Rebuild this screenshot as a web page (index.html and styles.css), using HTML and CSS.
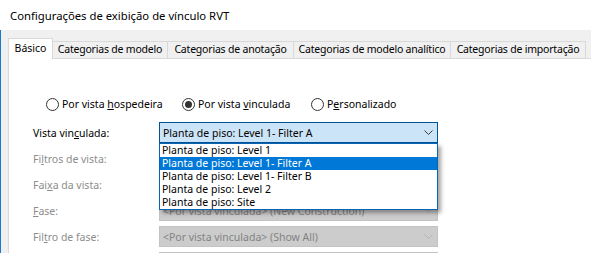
FILE: index.html
```html
<!DOCTYPE html>
<html lang="pt">
<head>
<meta charset="utf-8">
<title>Configurações de exibição de vínculo RVT</title>
<link rel="stylesheet" href="styles.css">
</head>
<body>
<div class="titlebar">Configurações de exibição de vínculo RVT</div>
<div class="dialog">
  <div class="tabs">
    <div class="tab active t1">Básico</div>
    <div class="tab t2">Categorias de modelo</div>
    <div class="tab t3">Categorias de anotação</div>
    <div class="tab t4">Categorias de modelo analítico</div>
    <div class="tab t5">Categorias de importação</div>
  </div>
  <div class="panel">
    <div class="radios">
      <div class="radio r1"><span class="circle"></span><span>Por vista <u>h</u>ospedeira</span></div>
      <div class="radio r2"><span class="circle checked"></span><span>Por vista <u>v</u>inculada</span></div>
      <div class="radio r3"><span class="circle"></span><span>P<u>e</u>rsonalizado</span></div>
    </div>
    <div class="form">
      <div class="label">Vista vin<u>c</u>ulada:</div>
      <div class="combo-wrap">
        <div class="combo active">
          <span class="value">Planta de piso: Level 1- Filter A</span>
          <svg class="chev" width="9" height="5" viewBox="0 0 9 5"><polyline points="0.5,0.5 4.5,4.5 8.5,0.5" fill="none" stroke="#3c3c3c" stroke-width="1"/></svg>
        </div>
        <ul class="dropdown">
          <li>Planta de piso: Level 1</li>
          <li class="sel">Planta de piso: Level 1- Filter A</li>
          <li>Planta de piso: Level 1- Filter B</li>
          <li>Planta de piso: Level 2</li>
          <li>Planta de piso: Site</li>
        </ul>
      </div>

      <div class="label disabled">Fi<u>l</u>tros de vista:</div>
      <div class="combo disabled">
        <span class="value"></span>
        <svg class="chev" width="9" height="5" viewBox="0 0 9 5"><polyline points="0.5,0.5 4.5,4.5 8.5,0.5" fill="none" stroke="#b4b4b4" stroke-width="1"/></svg>
      </div>

      <div class="label disabled">Fai<u>x</u>a da vista:</div>
      <div class="combo disabled">
        <span class="value"></span>
        <svg class="chev" width="9" height="5" viewBox="0 0 9 5"><polyline points="0.5,0.5 4.5,4.5 8.5,0.5" fill="none" stroke="#b4b4b4" stroke-width="1"/></svg>
      </div>

      <div class="label disabled"><u>F</u>ase:</div>
      <div class="combo disabled">
        <span class="value">&lt;Por vista vinculada&gt; (New Construction)</span>
        <svg class="chev" width="9" height="5" viewBox="0 0 9 5"><polyline points="0.5,0.5 4.5,4.5 8.5,0.5" fill="none" stroke="#b4b4b4" stroke-width="1"/></svg>
      </div>

      <div class="label disabled">Fil<u>t</u>ro de fase:</div>
      <div class="combo disabled">
        <span class="value">&lt;Por vista vinculada&gt; (Show All)</span>
        <svg class="chev" width="9" height="5" viewBox="0 0 9 5"><polyline points="0.5,0.5 4.5,4.5 8.5,0.5" fill="none" stroke="#b4b4b4" stroke-width="1"/></svg>
      </div>

      <div class="label disabled"></div>
      <div class="combo disabled">
        <span class="value"></span>
      </div>
    </div>
  </div>
</div>
</body>
</html>
```

FILE: styles.css
```css
* { box-sizing: border-box; }

body {
  margin: 0;
  width: 591px;
  height: 253px;
  overflow: hidden;
  background: #f0f0f0;
  font-family: "Noto Sans", "DejaVu Sans", sans-serif;
  font-size: 10.5px;
  color: #000;
}

u { text-decoration: underline; text-underline-offset: 1px; }

.titlebar {
  height: 30px;
  background: #fff;
  padding-left: 10px;
  display: flex;
  align-items: center;
  font-size: 11.3px;
}

.dialog {
  border-left: 1px solid #1a79cc;
  padding: 8px 0 0 7px;
  height: 223px;
}

.tabs {
  display: flex;
  align-items: flex-end;
  height: 21px;
  position: relative;
  z-index: 1;
  margin-bottom: -1px;
}

.tab {
  height: 18px;
  border: 1px solid #d9d9d9;
  line-height: 15px;
  margin-left: -1px;
  background: #f0f0f0;
  white-space: nowrap;
  text-align: center;
  letter-spacing: -0.2px;
  flex: none;
}
.tab.t1 { width: 45px; }
.tab.t2 { width: 116px; }
.tab.t3 { width: 127px; }
.tab.t4 { width: 158px; }
.tab.t5 { width: 136px; }

.tab.active {
  height: 21px;
  margin-left: 0;
  border-bottom: none;
  background: #fff;
  line-height: 18px;
  letter-spacing: 0;
  z-index: 2;
}

.panel {
  background: #fff;
  border: 1px solid #d9d9d9;
  border-right: none;
  height: 200px;
}

.radios {
  display: flex;
  height: 14px;
  margin-top: 38px;
  padding-left: 37px;
  align-items: center;
}

.radio {
  display: flex;
  align-items: center;
  gap: 3px;
  white-space: nowrap;
}
.radio.r1 { width: 136px; }
.radio.r2 { width: 129px; }

.circle {
  width: 13px;
  height: 13px;
  border: 1px solid #333;
  border-radius: 50%;
  background: #fff;
  display: flex;
  align-items: center;
  justify-content: center;
  flex: none;
}
.circle.checked::after {
  content: "";
  width: 7px;
  height: 7px;
  border-radius: 50%;
  background: #333;
}

.form {
  display: grid;
  grid-template-columns: 126px 279px;
  grid-auto-rows: 21px;
  row-gap: 5px;
  margin-top: 11px;
  padding-left: 24px;
  align-items: center;
}

.label { white-space: nowrap; }
.label.disabled { color: #8d8d8d; }

.combo-wrap { position: relative; height: 21px; }

.combo {
  height: 21px;
  border: 1px solid #c3c3c3;
  display: flex;
  align-items: center;
  justify-content: space-between;
  padding: 0 4px 0 3px;
  white-space: nowrap;
}
.combo.active {
  background: #cce4f7;
  border-color: #005499;
}
.combo.disabled {
  background: #cccccc;
  color: #838383;
}
.chev { flex: none; }

.dropdown {
  position: absolute;
  top: 21px;
  left: 0;
  width: 279px;
  margin: 0;
  padding: 0;
  list-style: none;
  background: #fff;
  border: 1px solid #0a64b4;
  box-shadow: 3px 3px 4px rgba(0, 0, 0, 0.35);
  z-index: 5;
}
.dropdown li {
  height: 13px;
  line-height: 13px;
  padding-left: 2px;
  white-space: nowrap;
}
.dropdown li.sel {
  background: #0078d7;
  color: #fff;
}
```
